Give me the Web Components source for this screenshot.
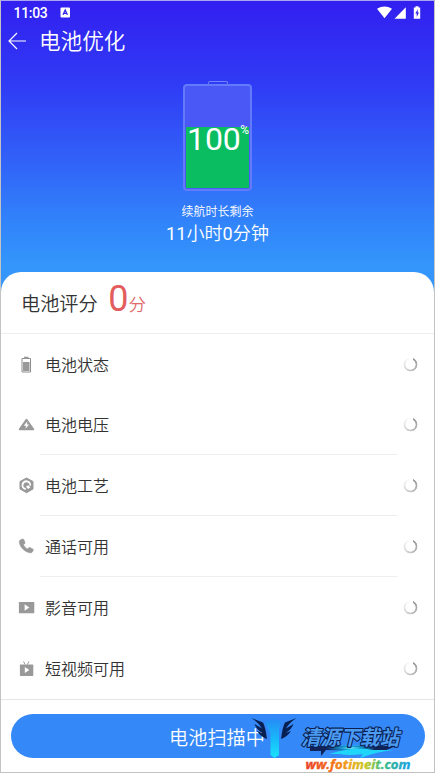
<!DOCTYPE html>
<html lang="zh-CN">
<head>
<meta charset="utf-8">
<title>电池优化</title>
<style>
html,body{margin:0;height:100%;overflow:hidden}
body{font-family:Roboto,"Noto Sans CJK SC",sans-serif;font-weight:350;background:#fff}
</style>
</head>
<body>
<battery-app></battery-app>
<script>
const define=(name,html,setup)=>{
  const t=document.createElement('template');t.innerHTML=html;
  customElements.define(name,class extends HTMLElement{
    constructor(){super();this.attachShadow({mode:'open'}).append(t.content.cloneNode(true));}
    connectedCallback(){if(setup)setup(this,this.shadowRoot);}
  });
};
const icons={
  battery:'<path fill="none" stroke="#8e8e8e" stroke-width="1" d="M4 2.500H12.500V16H4Z"/><path d="M6 .8H10.500V2.500H6ZM5 6H11.500V15H5Z"/>',
  voltage:'<path stroke="#999" stroke-width="2" stroke-linejoin="round" d="M8.500 3.800L15.200 13.300H1.800Z"/><path fill="#fff" d="M9.400 5.200L5.800 9.800H8L7.500 12.800L11.200 8.400H8.900Z"/>',
  craft:'<path stroke="#999" stroke-linejoin="round" d="M8.500 1L15 4.500V12L8.500 15.700L2 12V4.500Z"/><path fill="none" stroke="#fff" stroke-width="1.800" d="M7.700 12A3.900 3.900 0 1 1 12.200 8.700"/><path fill="#fff" d="M8 9.500L10.500 8.200L12.300 10.500L10 12Z"/>',
  call:'<path stroke="#999" stroke-width=".6" d="M2.200 2.100L4.400 1C5 .8 5.500 1 5.800 1.600L7 4.400C7.200 5 7 5.400 6.500 5.800L5.500 6.700C6.200 8.500 7.600 10 9.500 10.900L10.500 9.900C10.900 9.500 11.400 9.400 11.900 9.600L14.700 10.900C15.300 11.200 15.400 11.700 15.200 12.200L14.300 14C13.800 14.800 12.900 15 11.900 14.800C6.500 13.700 2 9.300 1.300 4.200C1.200 3.200 1.500 2.500 2.200 2.100Z"/>',
  media:'<rect x=".9" y="2.900" width="15.400" height="11.300" rx=".7"/><path fill="#fff" d="M6.600 5.300L11.300 8.500L6.600 11.700Z"/>',
  video:'<rect x="1.900" y="4.500" width="13.400" height="11.500" rx=".7"/><path d="M5.500 1.500L7.200 4.500M10.800 1.500L9.500 4.500" stroke="#999" fill="none"/><path fill="#fff" d="M6.800 7L11.300 10L6.800 13.100Z"/>'
};
define('status-bar',`<style>
:host{display:flex;height:24px;padding:0 13px 0 12.500px;align-items:center;color:#fff;font-size:14px;font-weight:500}
span{letter-spacing:-.3px;position:relative;top:-.5px}.a{margin-left:12px}.r{margin-left:auto}svg{display:block}
</style><span>11:03</span>
<svg class="a" width="11" height="12" viewBox="0 0 11 12"><rect y=".5" x=".5" width="9.500" height="10" rx="1" fill="#fff"/><path d="M3 7.700L5.200 3L7.400 7.700M3.800 6.300H6.700" fill="none" stroke="#3326e8" stroke-width="1.300"/></svg>
<svg class="r" width="45" height="14" viewBox="0 0 45 14" fill="#fff"><path d="M1 2.800Q8.500-1.700 16 2.800L8.500 12.300Z"/><path d="M29.800 1.200V12.700H18.500Z"/><path d="M37.800 1.500H39.500V.3H42.500V1.500H44.200V12.700H37.800Z"/><path d="M41.800 3.200L39.300 7.500H40.700V11L43 6.500H41.700Z" fill="#3326e8"/></svg>`);
define('app-title',`<style>
:host{display:flex;align-items:center;height:34px;padding-left:7px;color:#fff;font-size:21.600px;line-height:34px}
svg{margin:0 12px 2px 0}
</style><svg width="19" height="18" viewBox="0 0 19 18" fill="none" stroke="#fff" stroke-width="1.150"><path d="M9 1L1 9L9 17M1 9H18"/></svg><slot></slot>`);
define('battery-gauge',`<style>
:host{display:flex;flex-direction:column;align-items:center;width:69px}
.cap{width:18px;height:2px;border:1px solid #7182ff;border-bottom:0;border-radius:2px 2px 0 0}
.box{box-sizing:border-box;width:69px;height:107px;border:2px solid #637bfa;border-radius:4px;padding:1px 1.500px 1px 1px;background:#4a59f6;display:grid;align-items:end;position:relative}
.fill{height:61px;background:#0abd61}
.num{position:absolute;left:2px;top:33px;color:#fff;font-weight:400;font-size:32px;line-height:40px;display:flex;white-space:nowrap;letter-spacing:-.1px}
small{font-size:12px;line-height:16px;margin-top:3px;margin-left:-.5px}
</style><div class="cap"></div><div class="box"><div class="fill"></div><div class="num">100<small>%</small></div></div>`);
define('battery-hero',`<style>
:host{display:flex;flex-direction:column;align-items:center;color:#fff}
battery-gauge{margin-top:22px}
.a{font-size:12px;line-height:18px;margin-top:12px}.b{font-size:18px;line-height:26px;margin-top:0;font-weight:350;letter-spacing:.1px}i{font-style:normal;font-weight:400}
</style><battery-gauge></battery-gauge><div class="a">续航时长剩余</div><div class="b"><i>11</i>小时<i>0</i>分钟</div>`);
define('score-head',`<style>
:host{display:flex;align-items:baseline;box-sizing:border-box;height:62px;padding-left:20px;border-bottom:1px solid #eee;color:#333;font-size:19.200px;line-height:54px}
b{font-weight:400;color:#e35d5d;font-size:36px;margin-left:10.500px}i{font-style:normal;font-size:17.500px;color:#e06a6a}
</style><span>电池评分</span><b>0</b><i>分</i>`);
define('scan-row',`<style>
:host{display:flex;box-sizing:border-box;height:61px;padding:0 16.500px 1px 17px;align-items:center;color:#333;font-size:16px;line-height:24px;position:relative}
:host(:first-child){height:60px;padding-bottom:0}
:host([line])::after{content:"";position:absolute;left:39px;right:37px;bottom:0;height:1px;background:#eee}
.icon{width:17px;height:17px;fill:#999;margin-right:10px}
.label{padding-top:3px}
.spin{margin-left:auto;width:15px;height:15px;border-radius:50%;background:conic-gradient(from 25deg,#999,#bbb 35%,#ddd 60%,#f8f8f8 85%,#fff 95%);-webkit-mask:radial-gradient(circle,transparent 4.800px,#000 5.400px,#000 6.600px,transparent 7.200px);mask:radial-gradient(circle,transparent 4.800px,#000 5.400px,#000 6.600px,transparent 7.200px)}
</style><svg class="icon" viewBox="0 0 17 17"></svg><div class="label"><slot></slot></div><div class="spin"></div>`,
(el,r)=>{r.querySelector('svg').innerHTML=icons[el.getAttribute('icon')];});
define('scan-button',`<style>
:host{display:flex;align-items:center;justify-content:center;box-sizing:border-box;height:44px;padding:2px 1px 0 0;border-radius:22px;background:#3488f7;color:#fff;font-size:19.200px}
</style><slot></slot>`);
define('site-mark',`<style>:host{display:block;position:absolute;left:249px;top:714px;width:180px;height:58px}svg{display:block;overflow:visible}</style>
<svg width="180" height="58" viewBox="0 0 180 58">
<defs><linearGradient id="g" x1="0" x2="0" y1="0" y2="1"><stop stop-color="#268cf5"/><stop offset=".5" stop-color="#18b8fa"/><stop offset="1" stop-color="#18e3fb"/></linearGradient>
<radialGradient id="s"><stop stop-color="#7ff4f4"/><stop offset=".4" stop-color="#19b5ef" stop-opacity=".8"/><stop offset="1" stop-color="#19b5ef" stop-opacity="0"/></radialGradient>
<linearGradient id="u" gradientUnits="userSpaceOnUse" x1="55" x2="161" y1="0" y2="0"><stop stop-color="#e8402a"/><stop offset=".25" stop-color="#f36b18"/><stop offset=".42" stop-color="#efa51c"/><stop offset=".58" stop-color="#c4c824"/><stop offset=".72" stop-color="#42bd7a"/><stop offset="1" stop-color="#159ee8"/></linearGradient></defs>
<path fill="url(#g)" d="M15 7L21 4H26L31 6L29 14L29 40L24.500 43L20.500 40V18Z"/>
<g fill="#082051"><path d="M1.500 3L13 7.500Q15.500 12 17 24Q11 22 7 16L12.500 18Q6 14 4.500 9L12 13.500Q9 8 1.500 3Z"/><path d="M46.500 3L35 7.500Q32.500 12 31 24Q37 22 41 16L35.500 18Q42 14 43.500 9L36 13.500Q39 8 46.500 3Z"/></g>
<path d="M60 31H146L134 36L76 35L71 41V36H60Z" fill="#10245a"/>
<ellipse cx="101" cy="33" rx="25" ry="4" fill="url(#s)"/>
<path fill="#20d5fa" d="M79 39Q104 31 124 35H143Q126 37 110 43L113 39Q98 41 90 39Z"/>
<text x="51" y="30" font-family="Noto Sans CJK SC,sans-serif" font-weight="700" font-style="italic" font-size="20.500" textLength="98" lengthAdjust="spacingAndGlyphs" fill="#4b9bf2" stroke="#0b1f4e" stroke-width="2.200" stroke-linejoin="round" paint-order="stroke">清源下载站</text>
<text x="55.500" y="54.300" font-family="Open Sans,sans-serif" font-weight="700" font-style="italic" font-size="12.600" textLength="105" lengthAdjust="spacingAndGlyphs" fill="url(#u)" stroke="url(#u)" stroke-width=".35">ww.fotimeit.com</text>
</svg>`);
define('battery-app',`<style>
:host{display:flex;flex-direction:column;position:relative;box-sizing:border-box;width:435px;height:773px;border:1px solid #c3c3c3;border-top-color:#aaa5f0;background:linear-gradient(#321ff0 0,#303cf5 85px,#315ff8 155px,#3183fa 220px,#3496fb 265px)}
main{margin-top:auto;height:500px;background:#fff;border-radius:20px 20px 0 0;display:flex;flex-direction:column}
footer{box-sizing:border-box;flex:1;border-top:1px solid #e6e6e6;padding:14px 9.500px 0}
section{height:365px}
</style><status-bar></status-bar><app-title>电池优化</app-title><battery-hero></battery-hero>
<main><score-head></score-head><section>
<scan-row icon="battery">电池状态</scan-row><scan-row icon="voltage" line>电池电压</scan-row><scan-row icon="craft" line>电池工艺</scan-row><scan-row icon="call" line>通话可用</scan-row><scan-row icon="media">影音可用</scan-row><scan-row icon="video">短视频可用</scan-row>
</section><footer><scan-button>电池扫描中</scan-button></footer></main><site-mark></site-mark>`);
</script>
</body>
</html>
